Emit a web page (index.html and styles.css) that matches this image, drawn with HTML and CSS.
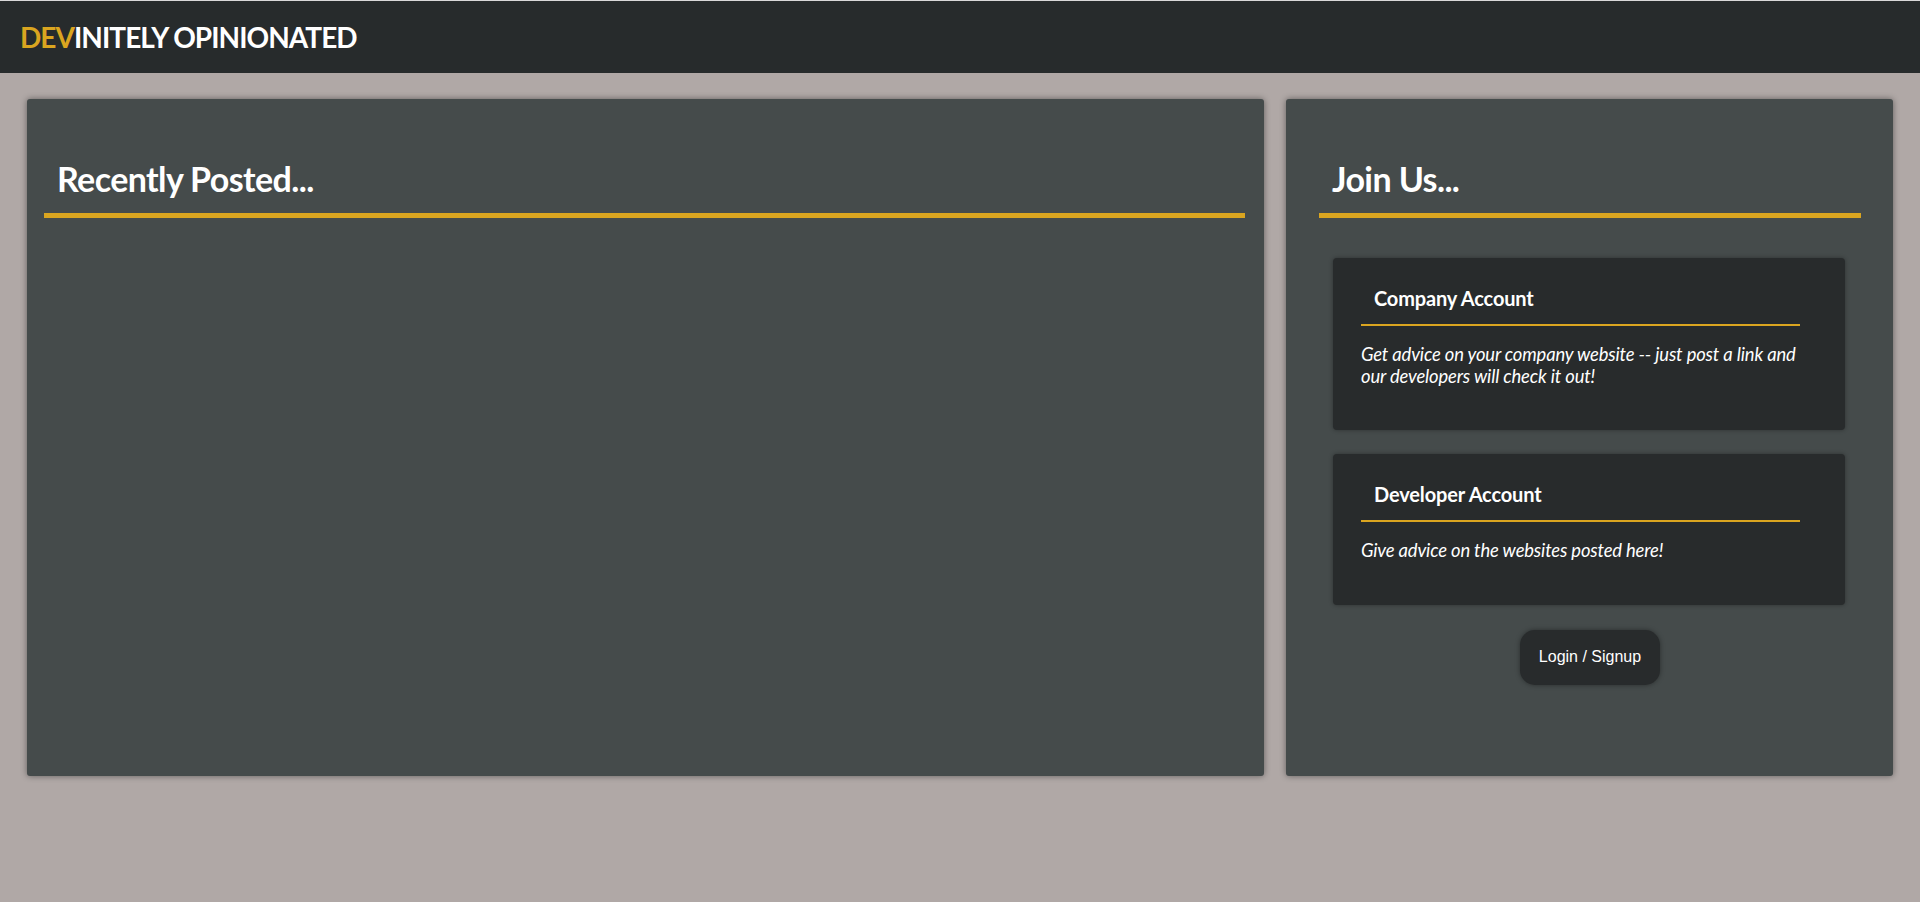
FILE: index.html
```html
<!DOCTYPE html>
<html lang="en">
<head>
<meta charset="utf-8">
<title>Devinitely Opinionated</title>
<link rel="stylesheet" href="styles.css">
</head>
<body>
<header class="topbar">
  <div class="logo"><span class="logo-accent">DEV</span>INITELY OPINIONATED</div>
</header>
<main class="layout">
  <section class="panel panel-posts">
    <h2 class="panel-title">Recently Posted...</h2>
  </section>
  <aside class="panel panel-join">
    <h2 class="panel-title">Join Us...</h2>
    <div class="account-card">
      <h3 class="card-title">Company Account</h3>
      <p class="card-text">Get advice on your company website -- just post a link and our developers will check it out!</p>
    </div>
    <div class="account-card">
      <h3 class="card-title">Developer Account</h3>
      <p class="card-text">Give advice on the websites posted here!</p>
    </div>
    <div class="actions">
      <button class="login-btn" type="button">Login / Signup</button>
    </div>
  </aside>
</main>
</body>
</html>
```
FILE: styles.css
```css
* { box-sizing: border-box; }

html, body {
  margin: 0;
  padding: 0;
}

body {
  background: #b0a8a6;
  font-family: Lato, "Open Sans", Arial, sans-serif;
  color: #ffffff;
  min-height: 902px;
}

.topbar {
  height: 73px;
  border-top: 1px solid #d9d9d9;
  background: #272b2c;
  display: flex;
  align-items: center;
  padding-left: 20px;
}

.logo {
  font-size: 28px;
  font-weight: 700;
  color: #ffffff;
  letter-spacing: -0.95px;
}

.logo-accent { color: #daa520; }

.layout {
  display: grid;
  grid-template-columns: 1237fr 607fr;
  gap: 22px;
  padding: 26px 27px 0 27px;
  align-items: stretch;
}

.panel {
  background: #454b4b;
  border-radius: 3px;
  box-shadow: 0 0 6px rgba(0, 0, 0, 0.45);
  padding-top: 61px;
}

.panel-posts { padding-left: 17px; padding-right: 19px; }

.panel-join {
  padding-left: 33px;
  padding-right: 32px;
  padding-bottom: 91px;
}

.panel-title {
  margin: 0;
  font-size: 34px;
  font-weight: 700;
  line-height: 38px;
  letter-spacing: -0.6px;
  padding: 0 0 15px 13px;
  border-bottom: 5px solid #daa520;
  color: #ffffff;
}

.account-card {
  background: #282b2c;
  border-radius: 4px;
  box-shadow: 0 0 4px rgba(0, 0, 0, 0.35);
  margin: 40px 16px 0 14px;
  padding: 29px 45px 43px 28px;
}

.account-card + .account-card { margin-top: 24px; }

.card-title {
  margin: 0;
  font-size: 20px;
  font-weight: 700;
  line-height: 22.5px;
  letter-spacing: -0.15px;
  padding: 0 0 14.5px 13px;
  border-bottom: 2px solid #daa520;
}

.card-text {
  margin: 18px 0 0 0;
  font-size: 18.4px;
  font-style: italic;
  line-height: 21.5px;
  letter-spacing: -0.15px;
}

.actions {
  display: flex;
  justify-content: center;
  margin-top: 25px;
}

.login-btn {
  font-family: "Liberation Sans", Arial, sans-serif;
  font-size: 16px;
  line-height: 18px;
  color: #ffffff;
  background: #282b2c;
  border: none;
  border-radius: 15px;
  padding: 18px 18.5px 19px;
  box-shadow: 0 0 5px rgba(0, 0, 0, 0.4);
}
```
